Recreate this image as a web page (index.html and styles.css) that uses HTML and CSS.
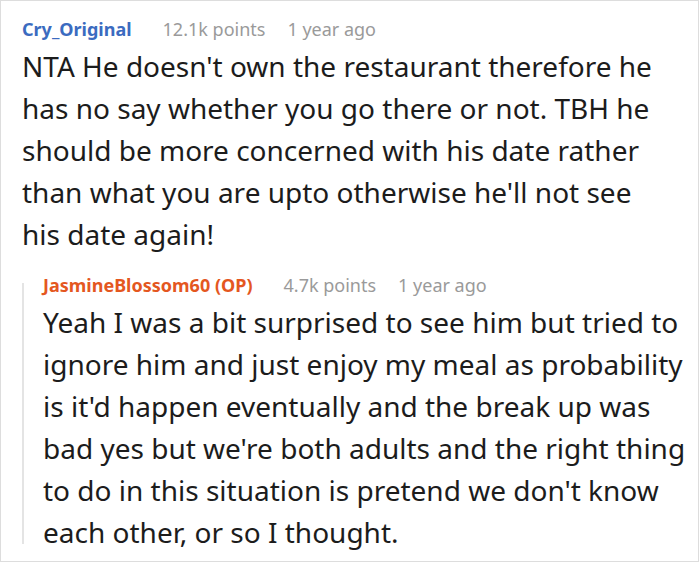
FILE: index.html
```html
<!DOCTYPE html>
<html>
<head>
<meta charset="utf-8">
<link rel="stylesheet" href="styles.css">
</head>
<body>
<div class="frame">
  <div class="comment">
    <div class="meta">
      <span class="author">Cry_Original</span>
      <span class="info">12.1k points</span>
      <span class="info">1 year ago</span>
    </div>
    <div class="text">NTA He doesn't own the restaurant therefore he has no say whether you go there or not. TBH he should be more concerned with his date rather than what you are upto otherwise he'll not see his date again!</div>
    <div class="reply">
      <div class="meta">
        <span class="author op">JasmineBlossom60 (OP)</span>
        <span class="info">4.7k points</span>
        <span class="info">1 year ago</span>
      </div>
      <div class="text reply-text">Yeah I was a bit surprised to see him but tried to ignore him and just enjoy my meal as probability is it'd happen eventually and the break up was bad yes but we're both adults and the right thing to do in this situation is pretend we don't know each other, or so I thought.</div>
    </div>
  </div>
</div>
</body>
</html>
```
FILE: styles.css
```css
html, body {
  margin: 0;
  padding: 0;
  background: #ffffff;
}
.frame {
  width: 697px;
  height: 560px;
  border: 1px solid #dddddd;
  font-family: "Noto Sans", "Open Sans", sans-serif;
}
.comment {
  padding: 16px 0 0 21px;
}
.meta {
  display: flex;
  gap: 22px;
  font-size: 18px;
  line-height: 24px;
  white-space: nowrap;
}
.author {
  color: #3b6bc0;
  font-weight: 700;
  margin-right: 9px;
}
.author.op {
  color: #e4571f;
}
.info {
  color: #9a9a9a;
}
.text {
  color: #1c1c1c;
  font-size: 28px;
  line-height: 42px;
  width: 640px;
  margin-top: 4px;
}
.reply {
  position: relative;
  margin-top: 18px;
  padding-left: 21px;
}
.reply::before {
  content: "";
  position: absolute;
  left: 0;
  top: 10px;
  bottom: 9px;
  width: 2px;
  background: #e4e4e4;
}
.reply-text {
  width: 656px;
}
```
